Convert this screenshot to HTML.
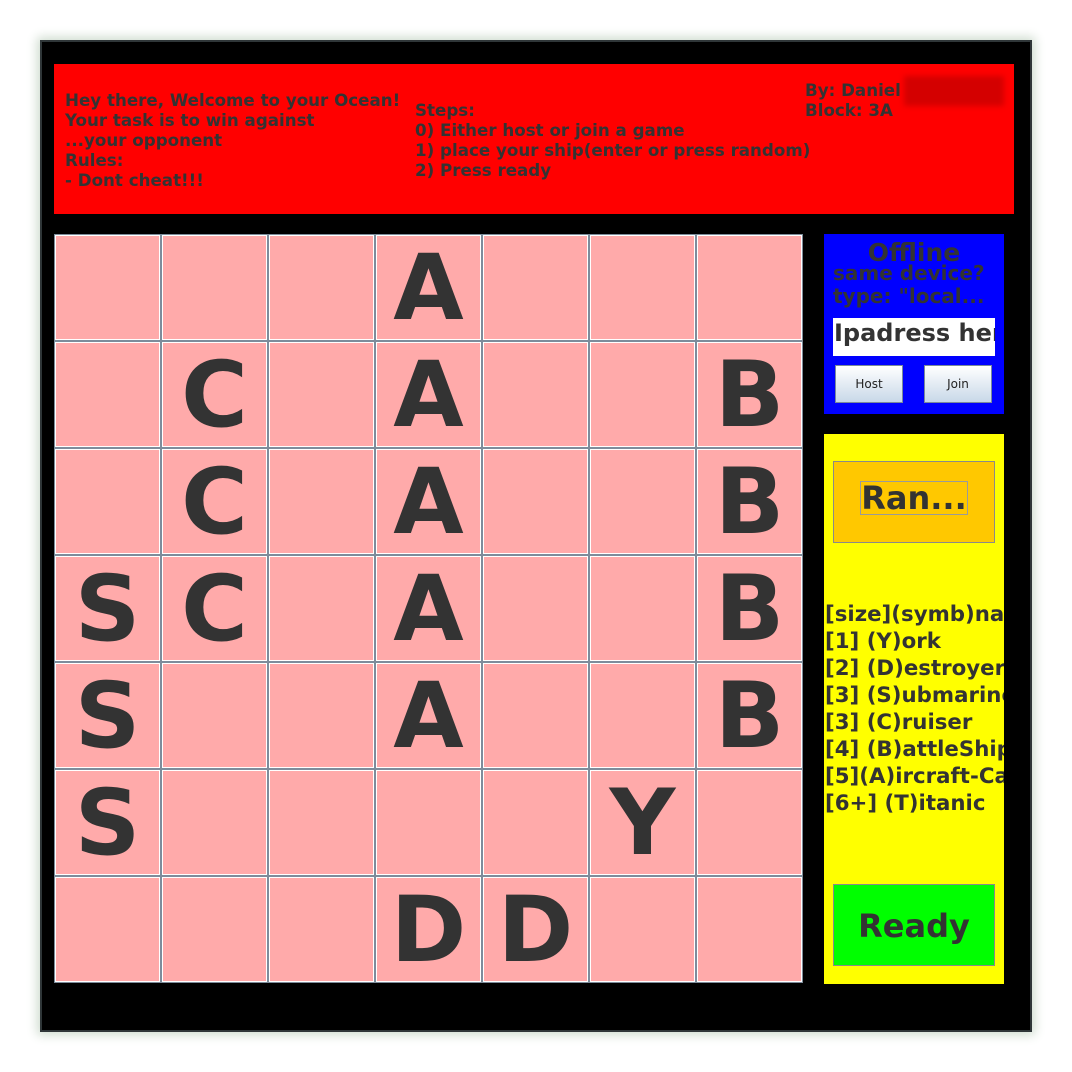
<!DOCTYPE html>
<html><head><meta charset="utf-8"><style>
body{margin:0;width:1072px;height:1072px;background:#fff;position:relative;overflow:hidden;font-family:"DejaVu Sans","Liberation Sans",sans-serif;font-weight:bold;color:#333}
.win{position:absolute;left:40px;top:40px;width:988px;height:988px;background:#000;border:2px solid #2f3638;box-shadow:0 0 10px 3px #cfdccf}
.abs{position:absolute}
.hdr{left:54px;top:64px;width:960px;height:150px;background:#f00;font-size:16.7px;line-height:20px}
.grid{left:54px;top:234px;width:749px;height:749px;display:grid;grid-template-columns:repeat(7,107px);grid-template-rows:repeat(7,107px)}
.c{background:#ffaaaa;box-sizing:border-box;border:1px solid #7d8c9b;box-shadow:inset 0 0 0 1px #fff;font-size:91px;line-height:107px;text-align:center}
.blue{left:824px;top:234px;width:180px;height:180px;background:#00f;overflow:hidden}
.yel{left:824px;top:434px;width:180px;height:550px;background:#ff0;overflow:hidden}
.btn{position:absolute;width:68px;height:38px;box-sizing:border-box;border:1px solid #7a8a9a;background:linear-gradient(#fff,#c8d8e8);font-size:12px;font-weight:normal;text-align:center;line-height:36px;color:#222}
</style></head><body>
<div class="win"></div>
<div class="abs hdr">
<div class="abs" style="left:11px;top:26px">Hey there, Welcome to your Ocean!<br>Your task is to win against<br>...your opponent<br>Rules:<br>- Dont cheat!!!</div>
<div class="abs" style="left:361px;top:36px">Steps:<br>0) Either host or join a game<br>1) place your ship(enter or press random)<br>2) Press ready</div>
<div class="abs" style="left:751px;top:16px">By: Daniel<br>Block: 3A</div>
<div class="abs" style="left:850px;top:12px;width:100px;height:30px;background:#d40000;filter:blur(3px)"></div>
</div>
<div class="abs grid">
<div class="c"></div><div class="c"></div><div class="c"></div><div class="c">A</div><div class="c"></div><div class="c"></div><div class="c"></div>
<div class="c"></div><div class="c">C</div><div class="c"></div><div class="c">A</div><div class="c"></div><div class="c"></div><div class="c">B</div>
<div class="c"></div><div class="c">C</div><div class="c"></div><div class="c">A</div><div class="c"></div><div class="c"></div><div class="c">B</div>
<div class="c">S</div><div class="c">C</div><div class="c"></div><div class="c">A</div><div class="c"></div><div class="c"></div><div class="c">B</div>
<div class="c">S</div><div class="c"></div><div class="c"></div><div class="c">A</div><div class="c"></div><div class="c"></div><div class="c">B</div>
<div class="c">S</div><div class="c"></div><div class="c"></div><div class="c"></div><div class="c"></div><div class="c">Y</div><div class="c"></div>
<div class="c"></div><div class="c"></div><div class="c"></div><div class="c">D</div><div class="c">D</div><div class="c"></div><div class="c"></div>
</div>
<div class="abs blue">
<div class="abs" style="left:0;width:180px;top:4px;text-align:center;font-size:25px;line-height:30px">Offline</div>
<div class="abs" style="left:9px;top:28px;font-size:20px;line-height:23px;white-space:nowrap">same device?<br>type: "local...</div>
<div class="abs" style="left:9px;top:84px;width:162px;height:38px;background:#fff;font-size:24px;line-height:30px;white-space:nowrap;overflow:hidden;font-weight:bold"><span style="margin-left:1px">Ipadress here</span></div>
<div class="btn" style="left:11px;top:131px">Host</div>
<div class="btn" style="left:100px;top:131px">Join</div>
</div>
<div class="abs yel">
<div class="abs" style="left:9px;top:27px;width:162px;height:82px;box-sizing:border-box;background:#ffc800;border:1px solid #8a8a8a"></div>
<div class="abs" style="left:36px;top:47px;width:108px;height:34px;box-sizing:border-box;border:1px solid #9a9a9a;font-size:32px;line-height:33px;text-align:center;white-space:nowrap">Ran...</div>
<div class="abs" style="left:1px;top:167px;font-size:21.3px;line-height:27px;white-space:nowrap">[size](symb)name<br>[1] (Y)ork<br>[2] (D)estroyer<br>[3] (S)ubmarine<br>[3] (C)ruiser<br>[4] (B)attleShip<br>[5](A)ircraft-Carrier<br>[6+] (T)itanic</div>
<div class="abs" style="left:9px;top:450px;width:162px;height:82px;box-sizing:border-box;background:#00ff00;border:1px solid #8a8a8a;font-size:32px;line-height:82px;text-align:center">Ready</div>
</div>
</body></html>
